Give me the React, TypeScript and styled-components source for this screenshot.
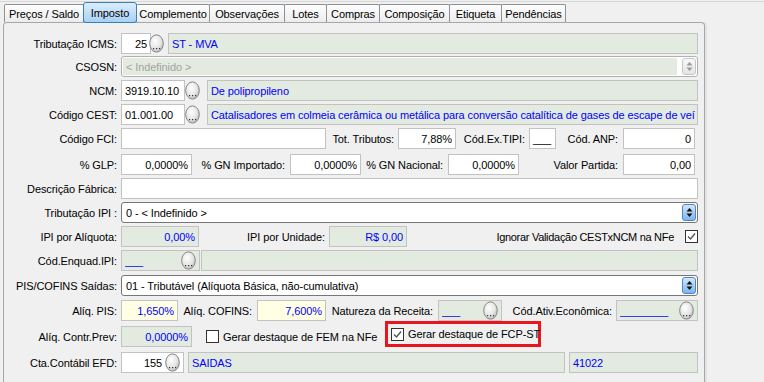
import React from 'react';
import styled, { createGlobalStyle, css } from 'styled-components';

const GlobalStyle = createGlobalStyle`
  html, body {
    margin: 0;
    padding: 0;
    background: #f0f0f0;
  }
  body {
    font-family: "Liberation Sans", Arial, sans-serif;
    font-size: 11px;
    letter-spacing: -0.1px;
    color: #000;
  }
`;

const Page = styled.div`
  width: 764px;
  height: 382px;
  overflow: hidden;
  padding-top: 1px;
  box-sizing: border-box;
`;

const TopRule = styled.div`
  height: 1px;
  background: #d6d6d6;
`;

const TabBar = styled.div`
  display: flex;
  align-items: flex-end;
  height: 21px;
  padding-left: 5px;
  position: relative;
  z-index: 2;
`;

const Tab = styled.div<{ $w: number; $active?: boolean }>`
  width: ${({ $w }) => $w}px;
  height: 18px;
  margin-left: -1px;
  margin-bottom: 1px;
  box-sizing: border-box;
  border: 1px solid #8e9097;
  border-bottom: none;
  border-radius: 2px 2px 0 0;
  background: linear-gradient(#fefefe, #ececec);
  display: flex;
  align-items: center;
  justify-content: center;
  white-space: nowrap;
  ${({ $active }) =>
    $active &&
    css`
      height: 21px;
      margin-bottom: 0;
      border: 1px solid #3c7fb1;
      border-radius: 3px;
      background: linear-gradient(#dcedfc, #a8d1f4);
      position: relative;
      z-index: 3;
    `}
`;

const Panel = styled.div`
  margin-left: 3px;
  margin-top: -1px;
  width: 702px;
  height: 362px;
  box-sizing: border-box;
  border: 1px solid #a7a7a7;
  border-bottom: none;
  border-radius: 4px 4px 0 0;
  padding: 10px 6px 0 0;
  box-shadow: 2px 0 0 #e2e2e2;
`;

const Row = styled.div<{ $mt?: number }>`
  display: flex;
  align-items: center;
  height: 21px;
  margin-top: ${({ $mt = 3 }) => $mt}px;
`;

const Label = styled.span<{ $w?: number; $pr?: number }>`
  flex: none;
  box-sizing: border-box;
  width: ${({ $w = 117 }) => $w}px;
  padding-right: ${({ $pr = 4 }) => $pr}px;
  text-align: right;
  white-space: nowrap;
`;

const tones = {
  white: '#ffffff',
  green: '#e3eadf',
  yellow: '#ffffe3',
};

const Field = styled.div<{
  $tone?: keyof typeof tones;
  $w?: number;
  $right?: boolean;
  $blue?: boolean;
  $ml?: number;
}>`
  ${({ $w }) => ($w ? `width: ${$w}px; flex: none;` : 'flex: 1;')}
  margin-left: ${({ $ml = 0 }) => $ml}px;
  height: 21px;
  box-sizing: border-box;
  border: 1px solid #c2c2c2;
  background: ${({ $tone = 'white' }) => tones[$tone]};
  color: ${({ $blue }) => ($blue ? '#0000ff' : '#000')};
  display: flex;
  align-items: center;
  justify-content: ${({ $right }) => ($right ? 'flex-end' : 'flex-start')};
  padding: 0 3px;
  white-space: nowrap;
  overflow: hidden;
`;

const FieldText = styled.span<{ $right?: boolean }>`
  flex: 1;
  overflow: hidden;
  text-align: ${({ $right }) => ($right ? 'right' : 'left')};
`;

const LookupWrap = styled.span<{ $ml?: number }>`
  flex: none;
  display: inline-flex;
  margin-left: ${({ $ml = 0 }) => $ml}px;
  position: relative;
  z-index: 1;
`;

const Lookup = ({ ml }: { ml?: number }) => (
  <LookupWrap $ml={ml}>
    <svg width="15" height="19" viewBox="0 0 15 19">
      <defs>
        <radialGradient id="lk" cx="0.4" cy="0.35" r="0.7">
          <stop offset="0" stopColor="#ffffff" />
          <stop offset="0.6" stopColor="#e6e6e6" />
          <stop offset="1" stopColor="#b9b9b9" />
        </radialGradient>
      </defs>
      <ellipse cx="7.5" cy="9.5" rx="6.8" ry="8.6" fill="url(#lk)" stroke="#858585" strokeWidth="1" />
      <rect x="4" y="14" width="1.2" height="1.2" fill="#333" />
      <rect x="7" y="14" width="1.2" height="1.2" fill="#333" />
      <rect x="10" y="14" width="1.2" height="1.2" fill="#333" />
    </svg>
  </LookupWrap>
);

const SelectBox = styled.div<{ $disabled?: boolean }>`
  flex: 1;
  height: 21px;
  box-sizing: border-box;
  display: flex;
  align-items: stretch;
  border: 1px solid ${({ $disabled }) => ($disabled ? '#b0b0b0' : '#767676')};
  border-radius: 3px;
  background: #fff;
  padding: 1px;
  color: ${({ $disabled }) => ($disabled ? '#a3a3a3' : '#000')};
`;

const SelectValue = styled.div<{ $disabled?: boolean }>`
  flex: 1;
  display: flex;
  align-items: center;
  padding-left: 3px;
  margin-right: ${({ $disabled }) => ($disabled ? 5 : 0)}px;
  background: ${({ $disabled }) => ($disabled ? '#e3eadf' : '#fff')};
  white-space: nowrap;
`;

const SpinButton = styled.div<{ $disabled?: boolean }>`
  width: 14px;
  flex: none;
  box-sizing: border-box;
  border-radius: 3px;
  border: 1px solid ${({ $disabled }) => ($disabled ? '#c6c6c6' : '#4a86c8')};
  background: ${({ $disabled }) =>
    $disabled ? 'linear-gradient(#f8f8f8, #e4e4e4)' : 'linear-gradient(#d3e7fb, #7fb5ec)'};
  display: flex;
  align-items: center;
  justify-content: center;
`;

const Spinner = ({ disabled }: { disabled?: boolean }) => (
  <SpinButton $disabled={disabled}>
    <svg width="7" height="11" viewBox="0 0 7 11">
      <polygon points="3.5,1 6.5,4.5 0.5,4.5" fill={disabled ? '#9a9a9a' : '#111'} />
      <polygon points="0.5,6.5 6.5,6.5 3.5,10" fill={disabled ? '#9a9a9a' : '#111'} />
    </svg>
  </SpinButton>
);

const Select = ({ value, disabled }: { value: string; disabled?: boolean }) => (
  <SelectBox $disabled={disabled}>
    <SelectValue $disabled={disabled}>{value}</SelectValue>
    <Spinner disabled={disabled} />
  </SelectBox>
);

const CheckBox = styled.span<{ $ml?: number }>`
  flex: none;
  width: 13px;
  height: 13px;
  box-sizing: border-box;
  border: 1px solid #333;
  background: #fff;
  margin-left: ${({ $ml = 0 }) => $ml}px;
  display: inline-flex;
  align-items: center;
  justify-content: center;
`;

const Check = ({ checked, ml }: { checked?: boolean; ml?: number }) => (
  <CheckBox $ml={ml}>
    {checked && (
      <svg width="11" height="11" viewBox="0 0 11 11">
        <polyline points="2,5.5 4.5,8 9,2.5" fill="none" stroke="#555" strokeWidth="1.4" />
      </svg>
    )}
  </CheckBox>
);

const CheckText = styled.span<{ $ml?: number; $tight?: boolean }>`
  margin-left: ${({ $ml = 4 }) => $ml}px;
  white-space: nowrap;
  letter-spacing: ${({ $tight }) => ($tight ? '-0.3px' : 'inherit')};
`;

const CheckGroup = styled.div<{ $w: number; $ml?: number }>`
  flex: none;
  width: ${({ $w }) => $w}px;
  margin-left: ${({ $ml = 0 }) => $ml}px;
  display: flex;
  align-items: center;
`;

const Highlight = styled.div`
  flex: none;
  align-self: flex-start;
  margin-top: -5px;
  width: 156px;
  height: 26px;
  box-sizing: border-box;
  border: 3px solid #e8151e;
  padding-left: 3px;
  display: flex;
  align-items: center;
`;

const Spacer = styled.div`
  flex: 1;
`;

const tabs = [
  ['Preços / Saldo', 80],
  ['Imposto', 54],
  ['Complemento', 74],
  ['Observações', 76],
  ['Lotes', 43],
  ['Compras', 54],
  ['Composição', 71],
  ['Etiqueta', 53],
  ['Pendências', 65],
] as const;

export default function App() {
  return (
    <Page>
      <GlobalStyle />
      <TopRule />
      <TabBar>
        {tabs.map(([name, w]) => (
          <Tab key={name} $w={w} $active={name === 'Imposto'}>
            {name}
          </Tab>
        ))}
      </TabBar>
      <Panel>
        <Row $mt={0}>
          <Label>Tributação ICMS:</Label>
          <Field $w={30} $right>
            25
          </Field>
          <Lookup ml={-2} />
          <Field $tone="green" $blue $ml={4}>
            ST - MVA
          </Field>
        </Row>

        <Row $mt={2}>
          <Label>CSOSN:</Label>
          <Select value="< Indefinido >" disabled />
        </Row>

        <Row>
          <Label>NCM:</Label>
          <Field $w={64}>3919.10.10</Field>
          <Lookup />
          <Field $tone="green" $blue $ml={7}>
            De polipropileno
          </Field>
        </Row>

        <Row>
          <Label>Código CEST:</Label>
          <Field $w={64}>01.001.00</Field>
          <Lookup />
          <Field $tone="green" $blue $ml={7}>
            Catalisadores em colmeia cerâmica ou metálica para conversão catalítica de gases de escape de veí
          </Field>
        </Row>

        <Row>
          <Label>Código FCI:</Label>
          <Field $w={205} />
          <Label $w={72}>Tot. Tributos:</Label>
          <Field $w={58} $right>
            7,88%
          </Field>
          <Label $w={73}>Cód.Ex.TIPI:</Label>
          <Field $w={27}>___</Field>
          <Label $w={67} $pr={5}>
            Cód. ANP:
          </Label>
          <Field $w={72} $right>
            0
          </Field>
        </Row>

        <Row $mt={5}>
          <Label>% GLP:</Label>
          <Field $w={71} $right>
            0,0000%
          </Field>
          <Label $w={98} $pr={5}>
            % GN Importado:
          </Label>
          <Field $w={71} $right>
            0,0000%
          </Field>
          <Label $w={87} $pr={5}>
            % GN Nacional:
          </Label>
          <Field $w={71} $right>
            0,0000%
          </Field>
          <Label $w={104} $pr={5}>
            Valor Partida:
          </Label>
          <Field $w={72} $right>
            0,00
          </Field>
        </Row>

        <Row>
          <Label>Descrição Fábrica:</Label>
          <Field />
        </Row>

        <Row>
          <Label>Tributação IPI :</Label>
          <Select value="0 - < Indefinido >" />
        </Row>

        <Row>
          <Label>IPI por Alíquota:</Label>
          <Field $tone="green" $w={78} $right $blue>
            0,00%
          </Field>
          <Label $w={130}>IPI por Unidade:</Label>
          <Field $tone="green" $w={78} $right $blue>
            R$ 0,00
          </Field>
          <Spacer />
          <CheckText $ml={0} $tight>
            Ignorar Validação CESTxNCM na NFe
          </CheckText>
          <Check checked ml={11} />
        </Row>

        <Row>
          <Label>Cód.Enquad.IPI:</Label>
          <Field $tone="green" $w={79} $blue>
            <FieldText>___</FieldText>
            <Lookup />
          </Field>
          <Field $tone="green" $ml={1} />
        </Row>

        <Row $mt={4}>
          <Label>PIS/COFINS Saídas:</Label>
          <Select value="01 - Tributável (Alíquota Básica, não-cumulativa)" />
        </Row>

        <Row $mt={4}>
          <Label>Alíq. PIS:</Label>
          <Field $tone="yellow" $w={57} $right $blue>
            1,650%
          </Field>
          <Label $w={79} $pr={5}>
            Alíq. COFINS:
          </Label>
          <Field $tone="yellow" $w={69} $right $blue>
            7,600%
          </Field>
          <Label $w={112} $pr={5}>
            Natureza da Receita:
          </Label>
          <Field $tone="green" $w={64} $blue>
            <FieldText>___</FieldText>
            <Lookup />
          </Field>
          <Label $w={114}>Cód.Ativ.Econômica:</Label>
          <Field $tone="green" $blue>
            <FieldText>________</FieldText>
            <Lookup />
          </Field>
        </Row>

        <Row $mt={5}>
          <Label>Alíq. Contr.Prev:</Label>
          <Field $tone="green" $w={71} $right $blue>
            0,0000%
          </Field>
          <CheckGroup $w={179} $ml={14}>
            <Check />
            <CheckText>Gerar destaque de FEM na NFe</CheckText>
          </CheckGroup>
          <Highlight>
            <Check checked />
            <CheckText>Gerar destaque de FCP-ST</CheckText>
          </Highlight>
        </Row>

        <Row $mt={5}>
          <Label>Cta.Contábil EFD:</Label>
          <Field $w={63} $right>
            <FieldText $right>155</FieldText>
            <Lookup ml={3} />
          </Field>
          <Field $tone="green" $w={377} $blue $ml={4}>
            SAIDAS
          </Field>
          <Field $tone="green" $blue $ml={4}>
            41022
          </Field>
        </Row>
      </Panel>
    </Page>
  );
}
